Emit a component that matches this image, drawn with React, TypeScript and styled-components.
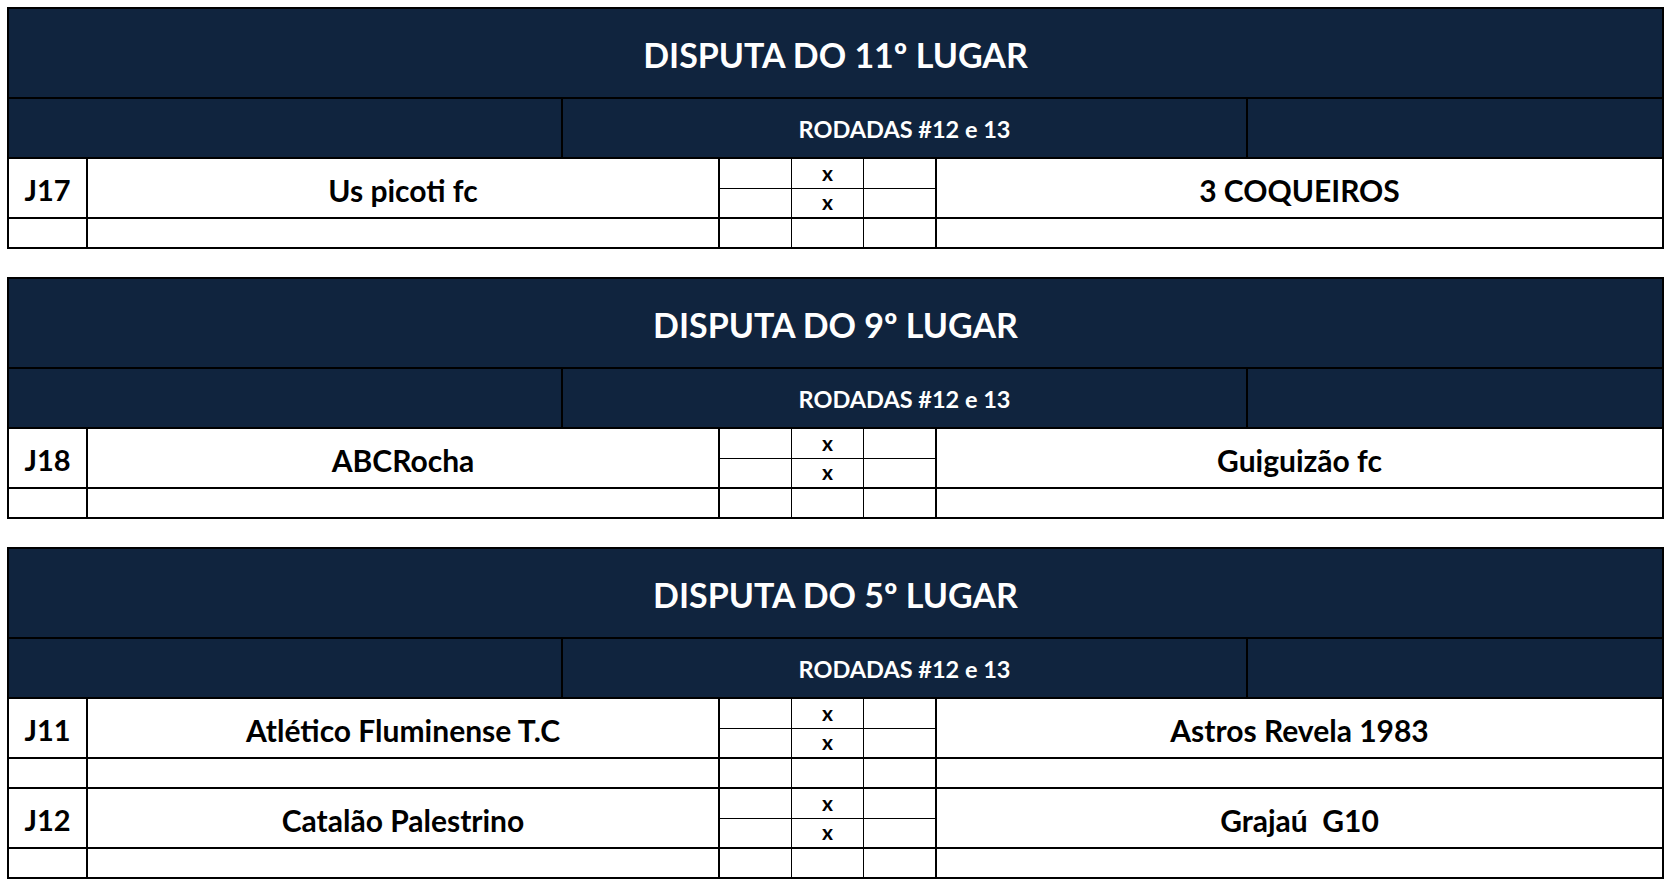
import React from 'react'
import styled, { createGlobalStyle } from 'styled-components'

const GlobalStyle = createGlobalStyle`
  html, body {
    margin: 0;
    padding: 0;
    background: #ffffff;
  }
  body {
    font-family: Lato, "Open Sans", "Liberation Sans", sans-serif;
  }
`

const NAVY = '#10243e'

type Line = 'thick' | 'thin' | 'none'
const lineWidth = (l: Line) => (l === 'thick' ? '2px' : l === 'thin' ? '1px' : '0')

const Page = styled.div`
  display: flex;
  flex-direction: column;
  gap: 28px;
  width: 1657px;
  padding: 7px 0 0 7px;
`

const Board = styled.section`
  border: 2px solid #000;
  border-bottom: none;
`

const TitleBar = styled.div`
  height: 90px;
  box-sizing: border-box;
  background: ${NAVY};
  border-bottom: 2px solid #000;
  display: flex;
  align-items: center;
  justify-content: center;
  color: #fff;
  font-weight: 700;
  font-size: 34px;
  padding-top: 2px;
`

const SubBar = styled.div`
  display: grid;
  grid-template-columns: 554px 685px 1fr;
  height: 60px;
  box-sizing: border-box;
  background: ${NAVY};
  border-bottom: 2px solid #000;
`

const SubCell = styled.div<{ $last?: boolean }>`
  border-right: ${(p) => (p.$last ? '0' : '2px solid #000')};
  display: flex;
  align-items: center;
  justify-content: center;
  color: #fff;
  font-weight: 700;
  font-size: 23.5px;
  padding-top: 2px;
`

const MatchGrid = styled.div`
  display: grid;
  grid-template-columns: 79px 632px 72px 72px 73px 1fr;
  grid-auto-rows: 30px;
`

const Cell = styled.div<{ $right: Line; $bottom: Line; $span?: number; $size?: number }>`
  box-sizing: border-box;
  grid-row: span ${(p) => p.$span ?? 1};
  border-right: ${(p) => lineWidth(p.$right)} solid #000;
  border-bottom: ${(p) => lineWidth(p.$bottom)} solid #000;
  display: flex;
  align-items: center;
  justify-content: center;
  color: #000;
  font-weight: 700;
  font-size: ${(p) => p.$size ?? 30}px;
  background: #fff;
  white-space: pre;
  padding-top: ${(p) => (p.$span ? '3px' : '0')};
`

const Versus = styled.span`
  font-size: 21px;
  line-height: 1;
  margin-top: -3px;
`

type Match = { id: string; home: string; away: string }
type Section = { title: string; round: string; matches: Match[] }

const SECTIONS: Section[] = [
  {
    title: 'DISPUTA DO 11º LUGAR',
    round: 'RODADAS #12 e 13',
    matches: [{ id: 'J17', home: 'Us picoti fc', away: '3 COQUEIROS' }],
  },
  {
    title: 'DISPUTA DO 9º LUGAR',
    round: 'RODADAS #12 e 13',
    matches: [{ id: 'J18', home: 'ABCRocha', away: 'Guiguizão fc' }],
  },
  {
    title: 'DISPUTA DO 5º LUGAR',
    round: 'RODADAS #12 e 13',
    matches: [
      { id: 'J11', home: 'Atlético Fluminense T.C', away: 'Astros Revela 1983' },
      { id: 'J12', home: 'Catalão Palestrino', away: 'Grajaú  G10' },
    ],
  },
]

function MatchRows({ m }: { m: Match }) {
  return (
    <>
      <Cell $right="thick" $bottom="thick" $span={2} $size={29}>{m.id}</Cell>
      <Cell $right="thick" $bottom="thick" $span={2}>{m.home}</Cell>
      <Cell $right="thin" $bottom="thin" />
      <Cell $right="thin" $bottom="thin"><Versus>x</Versus></Cell>
      <Cell $right="thick" $bottom="thin" />
      <Cell $right="none" $bottom="thick" $span={2}>{m.away}</Cell>
      <Cell $right="thin" $bottom="thick" />
      <Cell $right="thin" $bottom="thick"><Versus>x</Versus></Cell>
      <Cell $right="thick" $bottom="thick" />
      {/* blank spacer row under each game */}
      <Cell $right="thick" $bottom="thick" />
      <Cell $right="thick" $bottom="thick" />
      <Cell $right="thin" $bottom="thick" />
      <Cell $right="thin" $bottom="thick" />
      <Cell $right="thick" $bottom="thick" />
      <Cell $right="none" $bottom="thick" />
    </>
  )
}

export default function App() {
  return (
    <>
      <GlobalStyle />
      <Page>
        {SECTIONS.map((s) => (
          <Board key={s.title}>
            <TitleBar>{s.title}</TitleBar>
            <SubBar>
              <SubCell />
              <SubCell>{s.round}</SubCell>
              <SubCell $last />
            </SubBar>
            <MatchGrid>
              {s.matches.map((m) => (
                <MatchRows key={m.id} m={m} />
              ))}
            </MatchGrid>
          </Board>
        ))}
      </Page>
    </>
  )
}
